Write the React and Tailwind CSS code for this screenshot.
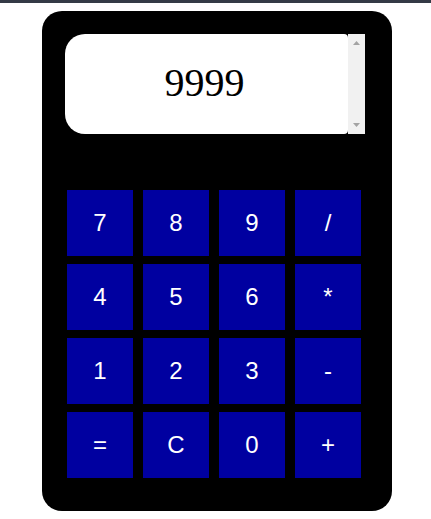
import React, { useState } from 'react';

const keys = ['7', '8', '9', '/', '4', '5', '6', '*', '1', '2', '3', '-', '=', 'C', '0', '+'];

const App = () => {
  const [display, setDisplay] = useState('9999');

  const handleKey = (key) => {
    if (key === 'C') {
      setDisplay('');
    } else if (key === '=') {
      try {
        // eslint-disable-next-line no-new-func
        setDisplay(String(Function(`return (${display})`)()));
      } catch (e) {
        setDisplay('Error');
      }
    } else {
      setDisplay(display + key);
    }
  };

  return (
    <div className="min-h-screen bg-white">
      {/* Top bar */}
      <div className="h-[3px] bg-[#343a46]"></div>

      {/* Calculator */}
      <div className="ml-[42px] mt-2 w-[350px] h-[500px] bg-black rounded-[20px] pt-[23px]">
        {/* Display */}
        <div className="ml-[23px] w-[300px] h-[100px] flex">
          <div
            className="flex-1 bg-white rounded-l-[20px] rounded-r-[4px] text-center text-[40px] text-black pt-[26px] pr-1 leading-[46px]"
            style={{ fontFamily: '"Liberation Serif", "Times New Roman", serif' }}
          >
            {display}
          </div>
          <div className="w-[17px] bg-[#f1f1f1] flex flex-col items-center justify-between py-[7px]">
            <svg width="7" height="4" viewBox="0 0 7 4">
              <path d="M3.5 0L7 4H0z" fill="#a3a3a3" />
            </svg>
            <svg width="7" height="4" viewBox="0 0 7 4">
              <path d="M0 0h7L3.5 4z" fill="#a3a3a3" />
            </svg>
          </div>
        </div>

        {/* Keys */}
        <div className="ml-[25px] mt-[56px] grid grid-cols-[repeat(4,66px)] gap-x-[10px] gap-y-2">
          {keys.map((key) => (
            <button
              key={key}
              onClick={() => handleKey(key)}
              className="w-[66px] h-[66px] bg-[#0000a0] text-white text-[24px] flex items-center justify-center"
              style={{ fontFamily: '"Liberation Sans", Arial, sans-serif' }}
            >
              {key}
            </button>
          ))}
        </div>
      </div>
    </div>
  );
};

export default App;
